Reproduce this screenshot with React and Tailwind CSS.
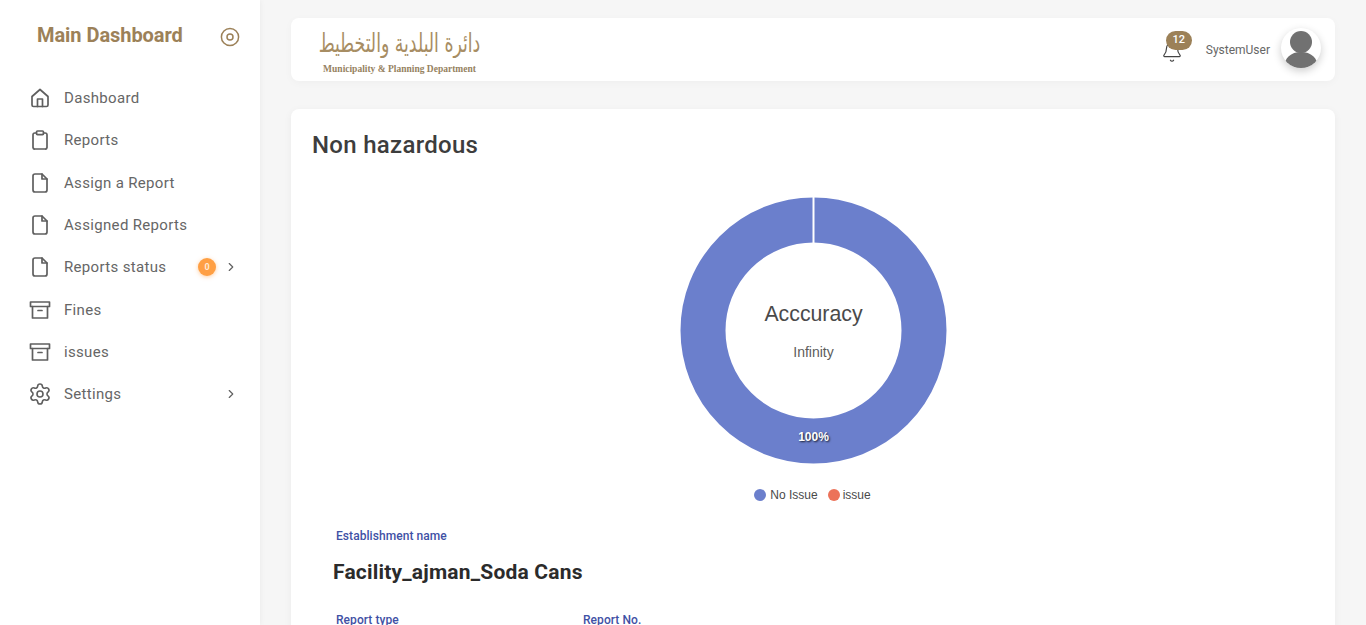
import { ChevronRight, Settings, Bell } from "lucide-react";

const cx = "[font-family:Roboto,sans-serif]";

function HomeIcon() {
  return (
    <svg width="24" height="24" viewBox="0 0 24 24" fill="none" stroke="#5f5f5f" strokeWidth="1.7" strokeLinecap="round" strokeLinejoin="round">
      <path d="M4 10.5 12 3.5l8 7V19a1.5 1.5 0 0 1-1.5 1.5h-13A1.5 1.5 0 0 1 4 19z" />
      <path d="M9.5 20.5V13h5v7.5" />
    </svg>
  );
}

function ClipboardIcon() {
  return (
    <svg width="24" height="24" viewBox="0 0 24 24" fill="none" stroke="#5f5f5f" strokeWidth="1.7" strokeLinecap="round" strokeLinejoin="round">
      <path d="M8.5 5H7a1.8 1.8 0 0 0-2 1.8v12.7A1.8 1.8 0 0 0 7 21h10a1.8 1.8 0 0 0 2-1.5V6.8A1.8 1.8 0 0 0 17 5h-1.5" />
      <rect x="8.5" y="3" width="7" height="3.6" rx="1" />
    </svg>
  );
}

function FileIcon() {
  return (
    <svg width="24" height="24" viewBox="0 0 24 24" fill="none" stroke="#5f5f5f" strokeWidth="1.7" strokeLinecap="round" strokeLinejoin="round">
      <path d="M14 3H7a2 2 0 0 0-2 2v14a2 2 0 0 0 2 2h10a2 2 0 0 0 2-2V8z" />
      <path d="M14 3v5h5" />
    </svg>
  );
}

function ArchiveIcon() {
  return (
    <svg width="24" height="24" viewBox="0 0 24 24" fill="none" stroke="#5f5f5f" strokeWidth="1.7" strokeLinecap="round" strokeLinejoin="round">
      <rect x="2.5" y="4" width="19" height="4.5" />
      <path d="M4.5 8.5V20h15V8.5" />
      <path d="M10 12.5h4" />
    </svg>
  );
}

const items = [
  { label: "Dashboard", icon: <HomeIcon /> },
  { label: "Reports", icon: <ClipboardIcon /> },
  { label: "Assign a Report", icon: <FileIcon /> },
  { label: "Assigned Reports", icon: <FileIcon /> },
  { label: "Reports status", icon: <FileIcon />, badge: "0", arrow: true },
  { label: "Fines", icon: <ArchiveIcon /> },
  { label: "issues", icon: <ArchiveIcon /> },
  { label: "Settings", icon: <Settings size={24} strokeWidth={1.6} color="#5f5f5f" />, arrow: true },
];

function Sidebar() {
  return (
    <aside className="w-[260px] shrink-0 bg-white shadow-[0_0_6px_rgba(0,0,0,0.06)]">
      <div className="flex h-[77px] items-start pl-[37px] pr-[20px] pt-[21px]">
        <h1 className="text-[20px] font-bold leading-[28px] tracking-[-0.05px] text-[#9c8158]">Main Dashboard</h1>
        <svg className="ml-auto mt-[6px]" width="20" height="20" viewBox="0 0 20 20" fill="none" stroke="#9c8158" strokeWidth="1.5">
          <circle cx="10" cy="10" r="8.6" />
          <circle cx="10" cy="10" r="3" />
        </svg>
      </div>
      <nav className="flex flex-col">
        {items.map((item) => (
          <div key={item.label} className="flex h-[42.33px] items-center pl-[28px] pr-[22px]">
            <span className="flex w-[24px] items-center justify-center">{item.icon}</span>
            <span className="ml-[12px] text-[15px] tracking-[0.33px] text-[#666]">{item.label}</span>
            {item.badge && (
              <span className="ml-auto flex h-[18px] w-[18px] items-center justify-center rounded-full bg-[#ff9f43] text-[9px] font-bold text-[#ffe9d2] shadow-[0_1px_4px_rgba(255,159,67,0.5)]">
                {item.badge}
              </span>
            )}
            {item.arrow && (
              <ChevronRight size={14} color="#616161" className={item.badge ? "ml-[8px]" : "ml-auto"} />
            )}
          </div>
        ))}
      </nav>
    </aside>
  );
}

function Header() {
  return (
    <header className="flex h-[63px] items-center rounded-lg bg-white pl-[28px] pr-[14px] shadow-[0_2px_8px_rgba(0,0,0,0.03)]">
      <div className="flex w-[161px] flex-col items-center">
        <span className="scale-y-150 whitespace-nowrap [font-family:'DejaVu_Sans',serif] text-[17.3px] leading-[30px] text-[#a78d63]" dir="rtl">
          دائرة البلدية والتخطيط
        </span>
        <span className="mt-[5px] mb-[-4px] whitespace-nowrap [font-family:'Liberation_Serif',serif] text-[9.5px] font-bold leading-[12px] text-[#96825f]">
          Municipality &amp; Planning Department
        </span>
      </div>
      <div className="relative ml-auto mr-[23px] mt-[4px]">
        <Bell size={22} strokeWidth={1.3} color="#444" />
        <span className="absolute left-[5px] top-[-10px] flex h-[19px] w-[26px] items-center justify-center rounded-full bg-[#9c8158] text-[11px] font-medium text-white">
          12
        </span>
      </div>
      <span className="text-[12px] text-[#666]">SystemUser</span>
      <div className="ml-[11px] mt-[-3px] h-[40px] w-[40px] overflow-hidden rounded-full bg-white shadow-[0_3px_8px_rgba(0,0,0,0.2)]">
        <svg width="40" height="40" viewBox="0 0 40 40" fill="#717171">
          <circle cx="20" cy="14" r="11" />
          <path d="M3 40C3 30 10 24 20 24s17 6 17 16z" />
        </svg>
      </div>
    </header>
  );
}

function Donut() {
  return (
    <div className="flex flex-col items-center">
      <div className="relative ml-[1px] h-[267px] w-[267px]">
        <svg width="267" height="267" viewBox="0 0 267 267">
          <circle cx="133.5" cy="133.5" r="110.5" fill="none" stroke="#6b7fcc" strokeWidth="45" />
          <path d="M133.5 0v46" stroke="#fff" strokeWidth="2" />
        </svg>
        <div className="absolute inset-0 flex flex-col items-center [font-family:'Liberation_Sans',sans-serif]">
          <span className="mt-[104px] text-[21.3px] leading-[26px] text-[#4a4a4a]">Acccuracy</span>
          <span className="mt-[17px] text-[14px] leading-[16px] text-[#5c5c5c]">Infinity</span>
          <span className="mt-[70px] text-[12px] font-bold leading-[14px] text-white [text-shadow:1px_1px_2px_rgba(0,0,0,0.8)]">100%</span>
        </div>
      </div>
      <div className="mr-[1px] mt-[24px] flex items-center text-[12px] leading-[14px] text-[#4a4a4a] [font-family:'Liberation_Sans',sans-serif]">
        <span className="h-[12px] w-[12px] rounded-full bg-[#6b7fcc]" />
        <span className="ml-[4px]">No Issue</span>
        <span className="ml-[10px] h-[12px] w-[12px] rounded-full bg-[#ec7259]" />
        <span className="ml-[3px]">issue</span>
      </div>
    </div>
  );
}

function Field({ label, className }) {
  return <div className={`text-[12px] font-medium leading-[14px] tracking-[0.06px] text-[#3f51a5] ${className || ""}`}>{label}</div>;
}

export default function App() {
  return (
    <div className={`flex h-[625px] w-[1366px] overflow-hidden bg-[#f6f6f6] ${cx}`}>
      <Sidebar />
      <main className="flex-1 pl-[31px] pr-[31px] pt-[18px]">
        <Header />
        <section className="mt-[28px] h-[600px] rounded-lg bg-white pl-[21px] pt-[20px] shadow-[0_2px_8px_rgba(0,0,0,0.05)]">
          <h2 className="text-[24px] font-medium leading-[32px] tracking-[0.3px] text-[#3d3d3d]">Non hazardous</h2>
          <div className="mt-[36px] pr-[21px]">
            <Donut />
          </div>
          <Field label="Establishment name" className="ml-[24px] mt-[27px]" />
          <div className="ml-[21px] mt-[15px] text-[21px] font-bold leading-[28px] tracking-[0.2px] text-[#2b2b2b]">Facility_ajman_Soda Cans</div>
          <div className="ml-[24px] mt-[27px] flex">
            <Field label="Report type" className="w-[247px]" />
            <Field label="Report No." />
          </div>
        </section>
      </main>
    </div>
  );
}
